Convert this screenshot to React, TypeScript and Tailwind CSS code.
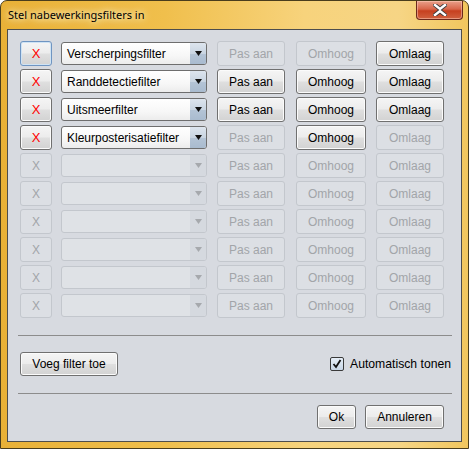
import React from 'react';

const font = "font-['Liberation_Sans',Arial,sans-serif]";

type BtnProps = {
  label: string;
  enabled: boolean;
  width: string;
  className?: string;
  focused?: boolean;
  red?: boolean;
};

function Btn({ label, enabled, width, className = '', focused, red }: BtnProps) {
  const base = `${width} h-[25px] rounded-[3px] flex items-center justify-center text-[12px] leading-none ${font} ${className}`;
  if (!enabled) {
    return (
      <div className={`${base} border border-[#c3c7cd] bg-[#dcdfe4] text-[#a2a5a9]`}>
        {label}
      </div>
    );
  }
  const border = focused
    ? 'border-[#6f95c2] shadow-[inset_0_0_0_1px_#cfe3f4]'
    : 'border-[#707070] shadow-[inset_0_0_0_1px_#fbfbfb]';
  return (
    <div
      className={`${base} border ${border} bg-[linear-gradient(#f5f5f5,#ececec_48%,#dfdfdf_52%,#d2d2d2)] ${red ? 'text-[#ff0000] text-[13px]' : 'text-black'}`}
    >
      {label}
    </div>
  );
}

function Combo({ value, enabled }: { value?: string; enabled: boolean }) {
  if (!enabled) {
    return (
      <div className="ml-[9px] w-[146px] h-[23px] rounded-[3px] border border-[#c3c7cd] bg-[#dfe2e6] flex">
        <div className="flex-1" />
        <div className="w-[16px] h-full bg-[#d5d9df] rounded-r-[2px] flex items-center justify-center">
          <svg width="7" height="5" viewBox="0 0 7 5">
            <path d="M0 0 H7 L3.5 5 Z" fill="#a6a9ad" />
          </svg>
        </div>
      </div>
    );
  }
  return (
    <div className="ml-[9px] w-[146px] h-[23px] rounded-[3px] border border-[#6e6e6e] bg-[linear-gradient(#ffffff,#f7f7f7_60%,#ececec)] flex overflow-hidden">
      <div className={`flex-1 flex items-center pl-[5px] text-[12px] text-black ${font}`}>{value}</div>
      <div className="w-[16px] h-full bg-[linear-gradient(#dde5ee,#c9d5e2_50%,#b4c4d6_52%,#a9bbcf)] flex items-center justify-center">
        <svg width="7" height="5" viewBox="0 0 7 5">
          <path d="M0 0 H7 L3.5 5 Z" fill="#111" />
        </svg>
      </div>
    </div>
  );
}

type Row = {
  filter?: string;
  pas: boolean;
  up: boolean;
  down: boolean;
};

const rows: Row[] = [
  { filter: 'Verscherpingsfilter', pas: false, up: false, down: true },
  { filter: 'Randdetectiefilter', pas: true, up: true, down: true },
  { filter: 'Uitsmeerfilter', pas: true, up: true, down: true },
  { filter: 'Kleurposterisatiefilter', pas: false, up: true, down: false },
  { pas: false, up: false, down: false },
  { pas: false, up: false, down: false },
  { pas: false, up: false, down: false },
  { pas: false, up: false, down: false },
  { pas: false, up: false, down: false },
  { pas: false, up: false, down: false },
];

function Separator({ className = '' }: { className?: string }) {
  return <div className={`ml-[10px] mr-[9px] h-px bg-[#8c8c8c] ${className}`} />;
}

const plainBtn =
  'h-[24px] rounded-[3px] border border-[#707070] shadow-[inset_0_0_0_1px_#fbfbfb] bg-[linear-gradient(#f5f5f5,#ececec_48%,#dfdfdf_52%,#d2d2d2)] flex items-center justify-center text-[12px] text-black';

export default function App() {
  return (
    <div className="w-[469px] h-[449px] flex flex-col rounded-t-[7px] border border-[#4a3d1c] bg-[linear-gradient(90deg,#e9b137,#f0bf4c_35%,#f7d37c_65%,#f6d585_85%,#f1c65e)]">
      <div className="h-[28px] flex items-start justify-between">
        <div className="pl-[7px] pt-[6px] text-[11px] text-black font-['Noto_Sans',sans-serif] [text-shadow:0_0_6px_#fff6d8,0_0_10px_#fff6d8]">
          Stel nabewerkingsfilters in
        </div>
        <div className="mr-[5px] w-[47px] h-[19px] rounded-b-[4px] border border-t-0 border-[#6b2a1c] bg-[linear-gradient(#e9a08a,#d8664a_45%,#c6401f_55%,#d0613f)] flex items-center justify-center shadow-[inset_0_0_0_1px_rgba(255,210,190,0.5)]">
          <svg width="14" height="12" viewBox="0 0 14 12">
            <path
              d="M2 1 L7 5 L12 1 M2 11 L7 7 L12 11"
              stroke="#3d3d3d"
              strokeWidth="4.2"
              fill="none"
              strokeLinecap="square"
            />
            <path
              d="M2 1 L7 5 L12 1 M2 11 L7 7 L12 11"
              stroke="#ffffff"
              strokeWidth="2.4"
              fill="none"
              strokeLinecap="square"
            />
          </svg>
        </div>
      </div>

      <div className="mx-[6px] h-[413px] border border-[#4d4d4d] bg-[#d7dae0] flex flex-col">
        <div className="pl-[12px] pt-[11px] flex flex-col gap-[3px]">
          {rows.map((r, i) => {
            const on = !!r.filter;
            return (
              <div key={i} className="flex items-center h-[25px]">
                <Btn label="X" enabled={on} width="w-[32px]" focused={i === 0} red />
                <Combo value={r.filter} enabled={on} />
                <Btn label="Pas aan" enabled={r.pas} width="w-[68px]" className="ml-[10px]" />
                <Btn label="Omhoog" enabled={r.up} width="w-[70px]" className="ml-[11px]" />
                <Btn label="Omlaag" enabled={r.down} width="w-[68px]" className="ml-[10px]" />
              </div>
            );
          })}
        </div>

        <Separator className="mt-[17px]" />

        <div className="mt-[16px] h-[24px] pl-[12px] pr-[10px] flex items-center justify-between">
          <div className={`w-[98px] ${plainBtn} ${font}`}>Voeg filter toe</div>
          <div className="flex items-center gap-[6px]">
            <div className="w-[14px] h-[14px] rounded-[2px] border border-[#3a3a3a] bg-[linear-gradient(#e6eef7,#c8d6e6)] flex items-center justify-center">
              <svg width="10" height="10" viewBox="0 0 10 10">
                <path d="M1.5 5 L4 8 L8.5 1" stroke="#111" strokeWidth="1.8" fill="none" />
              </svg>
            </div>
            <span className={`text-[12.2px] text-black ${font}`}>Automatisch tonen</span>
          </div>
        </div>

        <Separator className="mt-[17px]" />

        <div className="mt-[11px] pr-[17px] flex justify-end gap-[9px]">
          <div className={`w-[39px] ${plainBtn} ${font}`}>Ok</div>
          <div className={`w-[79px] ${plainBtn} ${font}`}>Annuleren</div>
        </div>
      </div>
    </div>
  );
}
